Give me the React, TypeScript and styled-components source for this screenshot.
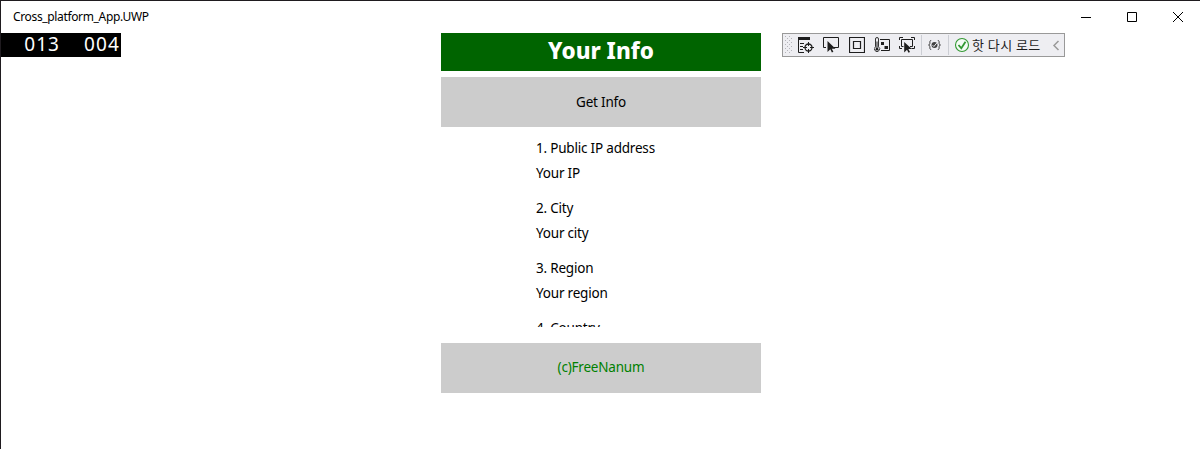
import React from "react";
import styled, { createGlobalStyle } from "styled-components";

const GlobalStyle = createGlobalStyle`
  * { box-sizing: border-box; }
  body { margin: 0; background: #fff; overflow: hidden; }
`;

const Window = styled.div`
  width: 1200px;
  height: 449px;
  border-top: 1px solid #1f1b1f;
  border-left: 1px solid #1f1b1f;
  background: #fff;
  color: #000;
  font-family: "Noto Sans", "Noto Sans CJK KR", sans-serif;
`;

const TitleBar = styled.header`
  display: flex;
  justify-content: space-between;
  height: 32px;
  padding-left: 12px;
`;

const AppTitle = styled.span`
  font-size: 12px;
  line-height: 32px;
  letter-spacing: -0.35px;
  white-space: nowrap;
`;

const WindowControls = styled.div`
  display: flex;
  margin-right: -1px;
`;

const ControlButton = styled.div`
  width: 46px;
  height: 32px;
  svg { display: block; }
`;

const Body = styled.main`
  display: flex;
  align-items: flex-start;
`;

const FrameCounter = styled.div`
  display: flex;
  justify-content: flex-end;
  gap: 24px;
  width: 120px;
  height: 24px;
  padding-right: 1px;
  background: #000;
  color: #fff;
  font-size: 19px;
  line-height: 23px;
  letter-spacing: 1.1px;
`;

const Page = styled.section`
  display: flex;
  flex-direction: column;
  width: 320px;
  margin-left: 320px;
`;

const Heading = styled.h1`
  height: 38px;
  margin: 0 0 6px;
  background: #006400;
  color: #fff;
  font-size: 22.5px;
  font-weight: 800;
  line-height: 36px;
  text-align: center;
`;

const Button = styled.div<{ $color?: string }>`
  height: 50px;
  background: #ccc;
  color: ${(p) => p.$color ?? "#000"};
  font-size: 13.5px;
  line-height: ${(p) => (p.$color ? 48 : 50)}px;
  letter-spacing: -0.2px;
  text-align: center;
`;

const InfoList = styled.div`
  display: flex;
  flex-direction: column;
  gap: 15px;
  height: 200px;
  margin-bottom: 16px;
  padding: 11px 0 0 95px;
  overflow: hidden;
`;

const InfoItem = styled.div`
  display: flex;
  flex: none;
  flex-direction: column;
  gap: 5px;
  font-size: 13.5px;
  line-height: 20px;
  letter-spacing: -0.2px;
`;

const Toolbar = styled.div`
  display: flex;
  align-items: center;
  width: 283px;
  height: 24px;
  margin-left: 21px;
  border: 1px solid #999;
  background: #eeeef2;
  svg { display: block; flex: none; }
`;

const ToolIcon = styled.svg<{ $gap: number }>`
  width: 16px;
  height: 16px;
  margin-left: ${(p) => p.$gap}px;
`;

const Separator = styled.span<{ $gap: number }>`
  width: 1px;
  height: 20px;
  margin-left: ${(p) => p.$gap}px;
  background: #ccced4;
`;

const ReloadLabel = styled.span`
  width: 70px;
  margin-left: 2px;
  color: #1e1e1e;
  font-family: "Noto Sans CJK KR", sans-serif;
  font-size: 13px;
  line-height: 20px;
  letter-spacing: 0.45px;
  white-space: nowrap;
`;

const gripRows = [0, 4, 8, 12, 16];

const Grip = () => (
  <svg width="7" height="18" style={{ marginLeft: 2 }} fill="#b4b4ba" shapeRendering="crispEdges">
    {gripRows.map((y) => (
      <g key={y}>
        <rect x="0" y={y} width="1" height="1" />
        <rect x="4" y={y} width="1" height="1" />
        <rect x="2" y={y + 2} width="1" height="1" />
        <rect x="6" y={y + 2} width="1" height="1" />
      </g>
    ))}
  </svg>
);

const TreeIcon = () => (
  <ToolIcon $gap={6} viewBox="0 0 16 16" fill="none" stroke="#1e1e1e">
    <path d="M0 0h12v3H0z" fill="#1e1e1e" stroke="none" />
    <path d="M.5 3v12.5H6M2 6.5h4M2 9.5h3M2 12.5h3" />
    <circle cx="10.5" cy="10.5" r="3.5" strokeWidth="1.3" />
    <path d="M10.5 5v4M10.5 12v4M5 10.5h4M12 10.5h4" />
  </ToolIcon>
);

const SelectIcon = () => (
  <ToolIcon $gap={9} viewBox="0 0 16 16" fill="none" stroke="#1e1e1e">
    <path d="M3 10.5H.5v-10h15v10H11" />
    <path d="M4.5 4v11l2.8-2.8 1.6 3.4 1.5-.8-1.6-3.1h3.7z" fill="#1e1e1e" stroke="none" />
  </ToolIcon>
);

const BoundsIcon = () => (
  <ToolIcon $gap={10} viewBox="0 0 16 16" fill="none" stroke="#1e1e1e" strokeWidth="1.2">
    <path d="M.5.5h15v15H.5zM4.5 4.5h7v7h-7z" />
  </ToolIcon>
);

const ThermometerIcon = () => (
  <ToolIcon $gap={9} viewBox="0 0 16 16" fill="none" stroke="#1e1e1e">
    <path d="M1.5 9.8V2a1.5 1.5 0 0 1 3 0v7.8a2.6 2.6 0 1 1-3 0z" fill="#eeeef2" strokeWidth=".9" />
    <circle cx="3" cy="12.2" r="1.4" fill="#1e1e1e" stroke="none" />
    <path d="M3 4.5v7M6 2.5h9.5v11H7" />
    <path d="M7 5h3v3H7zM10.5 9H14v3h-3.5z" fill="#1e1e1e" stroke="none" />
  </ToolIcon>
);

const TrackFocusIcon = () => (
  <ToolIcon $gap={9} viewBox="0 0 16 16" fill="none" stroke="#1e1e1e">
    <path d="M.5 3V.5H4M12 .5h3.5V3M.5 9v2.5H3M12.5 11.5h3V9" />
    <path d="M4.5 9.5h-2v-7h11v7H11" />
    <path d="M5.2 5v10.5L8 12.8l1.5 3 1.5-.8-1.6-3h3.5z" fill="#1e1e1e" stroke="none" />
  </ToolIcon>
);

const BindingIcon = () => (
  <ToolIcon $gap={5} viewBox="0 0 16 16" fill="none" stroke="#424242">
    <path d="M4.2 3.5C2.7 3.5 2.9 4.2 2.9 6c0 1.2-.4 2-1.4 2 1 0 1.4.8 1.4 2 0 1.8-.2 2.5 1.3 2.5M10.8 3.5c1.5 0 1.3.7 1.3 2.5 0 1.2.4 2 1.4 2-1 0-1.4.8-1.4 2 0 1.8.2 2.5-1.3 2.5" />
    <circle cx="7.5" cy="8" r="3" fill="#424242" stroke="none" />
    <path d="M5.6 8.2l1.3 1.3 3.3-4" stroke="#eeeef2" />
  </ToolIcon>
);

const CheckIcon = () => (
  <ToolIcon $gap={5} viewBox="0 0 16 16" fill="none" stroke="#339933">
    <circle cx="8" cy="8" r="6.5" fill="#f5fbf5" strokeWidth="1.1" />
    <path d="M4.5 8l2.8 3.2 4.2-6.4" strokeWidth="1.8" />
  </ToolIcon>
);

const entries = [
  ["1. Public IP address", "Your IP"],
  ["2. City", "Your city"],
  ["3. Region", "Your region"],
  ["4. Country"],
];

export default function App() {
  return (
    <Window>
      <GlobalStyle />
      <TitleBar>
        <AppTitle>Cross_platform_App.UWP</AppTitle>
        <WindowControls>
          <ControlButton>
            <svg width="46" height="32" stroke="#000"><path d="M18 16.5h10" /></svg>
          </ControlButton>
          <ControlButton>
            <svg width="46" height="32" stroke="#000" fill="none"><path d="M18.5 11.5h9v9h-9z" /></svg>
          </ControlButton>
          <ControlButton>
            <svg width="46" height="32" stroke="#000"><path d="M18 11l10 10M28 11L18 21" /></svg>
          </ControlButton>
        </WindowControls>
      </TitleBar>
      <Body>
        <FrameCounter><span>013</span><span>004</span></FrameCounter>
        <Page>
          <Heading>Your Info</Heading>
          <Button>Get Info</Button>
          <InfoList>
            {entries.map((lines) => (
              <InfoItem key={lines[0]}>
                {lines.map((line) => <span key={line}>{line}</span>)}
              </InfoItem>
            ))}
          </InfoList>
          <Button $color="#008000">(c)FreeNanum</Button>
        </Page>
        <Toolbar>
          <Grip />
          <TreeIcon />
          <SelectIcon />
          <BoundsIcon />
          <ThermometerIcon />
          <TrackFocusIcon />
          <Separator $gap={6} />
          <BindingIcon />
          <Separator $gap={5} />
          <CheckIcon />
          <ReloadLabel>핫 다시 로드</ReloadLabel>
          <svg width="8" height="12" style={{ marginLeft: 10 }} fill="none" stroke="#999" strokeWidth="1.5">
            <path d="M6.5 2L2 6.5 6.5 11" />
          </svg>
        </Toolbar>
      </Body>
    </Window>
  );
}
